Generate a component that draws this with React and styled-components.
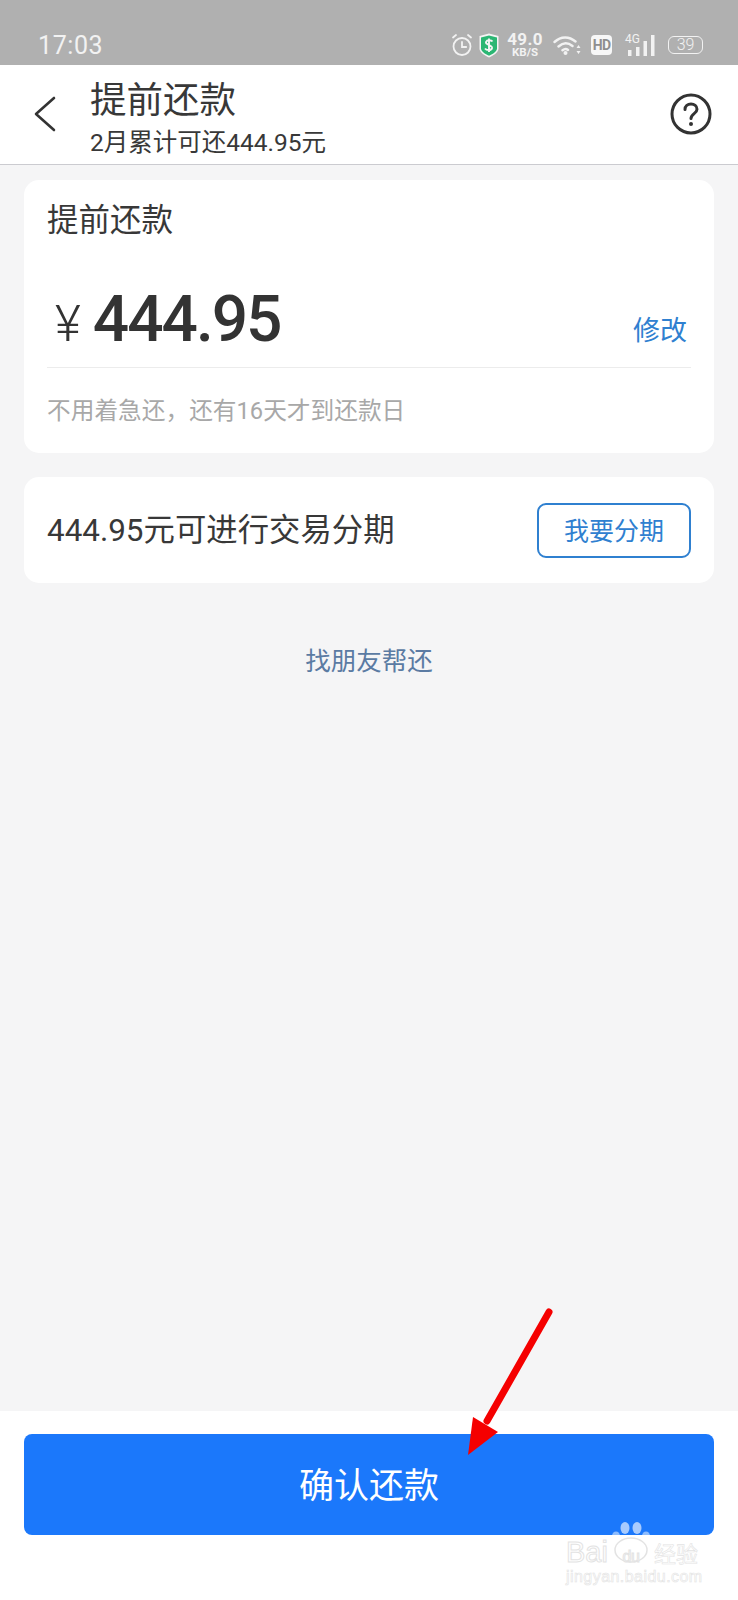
import React from "react";
import styled, { createGlobalStyle } from "styled-components";

const FONT = `Roboto, "Noto Sans CJK SC", sans-serif`;

const Global = createGlobalStyle`
  html, body { margin: 0; padding: 0; background: #f5f5f6; }
  * { box-sizing: border-box; }
`;

const Page = styled.div`
  position: relative;
  width: 738px;
  height: 1600px;
  display: flex;
  flex-direction: column;
  overflow: hidden;
  font-family: ${FONT};
  color: #333;
  background: #f5f5f6;
`;

const StatusBar = styled.div`
  height: 65px;
  flex: none;
  background: #b0b0b0;
  display: flex;
  align-items: flex-end;
  justify-content: space-between;
  padding: 0 35px 4px 38px;
  color: #f2f2f2;
`;
const Time = styled.span`
  font-size: 25px;
  line-height: 30px;
  letter-spacing: 0.6px;
  font-weight: 400;
`;
const StatusIcons = styled.div`
  display: flex;
  align-items: center;
  height: 26px;
  margin-bottom: 3px;
`;
const AlarmIcon = styled.svg`
  margin-right: 6px;
`;
const Speed = styled.div`
  display: flex;
  flex-direction: column;
  align-items: center;
  width: 34px;
  margin: 0 11px 0 9px;
  font-weight: 700;
  line-height: 1;
`;
const SpeedValue = styled.span`
  font-size: 17px;
  line-height: 15px;
  letter-spacing: 0.3px;
`;
const SpeedUnit = styled.span`
  font-size: 11.5px;
  line-height: 11px;
`;
const HdBadge = styled.span`
  width: 21px;
  height: 20px;
  margin: 0 13px 0 10px;
  background: #f7f7f7;
  border-radius: 4px;
  color: #8f8f8f;
  font-size: 14px;
  font-weight: 700;
  line-height: 20px;
  text-align: center;
  letter-spacing: -0.8px;
`;
const Signal = styled.div`
  position: relative;
  width: 30px;
  height: 21px;
  margin-right: 13px;
`;
const SignalLabel = styled.span`
  position: absolute;
  left: 0;
  top: -2px;
  font-size: 12px;
  line-height: 12px;
`;
const Battery = styled.span`
  width: 35px;
  height: 18px;
  border: 1.5px solid #f2f2f2;
  border-radius: 6px;
  font-size: 16px;
  line-height: 15px;
  text-align: center;
  font-weight: 300;
`;

const Header = styled.header`
  height: 100px;
  flex: none;
  background: #fff;
  border-bottom: 1px solid #cbcbd0;
  display: flex;
  align-items: center;
  padding: 0 26px 0 34px;
`;
const BackButton = styled.svg`
  width: 22px;
  height: 36px;
  margin: 0 34px 1px 0;
  flex: none;
`;
const TitleBlock = styled.div`
  flex: 1;
  display: flex;
  flex-direction: column;
`;
const Title = styled.div`
  font-size: 36.5px;
  line-height: 50px;
  margin-top: 6px;
  color: #383838;
`;
const Subtitle = styled.div`
  font-size: 24.5px;
  line-height: 32px;
  color: #383838;
  margin-top: 1px;
`;
const HelpIcon = styled.svg`
  width: 42px;
  height: 42px;
  flex: none;
  margin-bottom: 1px;
`;

const Main = styled.main`
  flex: 1;
  display: flex;
  flex-direction: column;
  padding: 15px 24px 0;
`;
const Card = styled.section`
  background: #fff;
  border-radius: 15px;
`;
const RepayCard = styled(Card)`
  height: 273px;
  padding: 19px 23px 0;
`;
const CardTitle = styled.div`
  font-size: 31.5px;
  line-height: 44px;
  color: #383838;
`;
const AmountRow = styled.div`
  display: flex;
  align-items: flex-end;
  justify-content: space-between;
  height: 125px;
  border-bottom: 1px solid #ececec;
  padding-bottom: 17px;
`;
const Amount = styled.div`
  display: flex;
  align-items: baseline;
  padding-left: 8px;
  margin-bottom: -4px;
`;
const Currency = styled.span`
  font-size: 50px;
  line-height: 60px;
  font-weight: 300;
  margin-right: 12px;
  color: #333;
`;
const AmountValue = styled.span`
  font-size: 64px;
  line-height: 60px;
  font-weight: 500;
  letter-spacing: -2px;
  color: #333;
`;
const EditLink = styled.span`
  font-size: 27px;
  line-height: 38px;
  color: #2f80d0;
  margin-right: 4px;
`;
const Hint = styled.div`
  font-size: 23.7px;
  line-height: 34px;
  color: #a8a8a8;
  margin-top: 26px;
`;
const InstallCard = styled(Card)`
  height: 106px;
  margin-top: 24px;
  padding: 0 23px;
  display: flex;
  align-items: center;
  justify-content: space-between;
`;
const InstallText = styled.span`
  font-size: 31.4px;
  line-height: 40px;
  color: #383838;
  margin-top: 2px;
`;
const OutlineButton = styled.button`
  width: 154px;
  height: 55px;
  padding: 0 0 3px;
  border: 2px solid #2f80d0;
  border-radius: 9px;
  background: #fff;
  color: #2f80d0;
  font-family: ${FONT};
  font-size: 25px;
`;
const FriendLink = styled.div`
  margin-top: 60px;
  text-align: center;
  font-size: 25.5px;
  line-height: 36px;
  color: #5b7ba3;
`;

const Footer = styled.footer`
  height: 189px;
  flex: none;
  background: #fff;
  padding: 23px 24px 0;
`;
const ConfirmButton = styled.button`
  display: block;
  width: 100%;
  height: 101px;
  padding: 0 0 4px;
  border: 0;
  border-radius: 8px;
  background: #1b78fb;
  color: #fff;
  font-family: ${FONT};
  font-size: 35px;
`;

const ArrowOverlay = styled.svg`
  position: absolute;
  left: 460px;
  top: 1305px;
  width: 100px;
  height: 160px;
`;
const Watermark = styled.div`
  position: absolute;
  left: 566px;
  top: 1521px;
  width: 140px;
  height: 70px;
`;
const Paw = styled.svg`
  position: absolute;
  left: 46px;
  top: 0;
  width: 38px;
  height: 42px;
`;
const MarkBrand = styled.div`
  position: absolute;
  left: 0;
  top: 17px;
  width: 132px;
  display: flex;
  justify-content: space-between;
  align-items: baseline;
  font-family: "Liberation Sans", "Noto Sans CJK SC", sans-serif;
  font-size: 29px;
  line-height: 28px;
  color: #fff;
  -webkit-text-stroke: 1px #e3e3e3;
  white-space: nowrap;
`;
const MarkDu = styled.span`
  font-size: 16px;
  letter-spacing: -0.5px;
`;
const MarkCn = styled.span`
  font-size: 22px;
  -webkit-text-stroke: 0.6px #e3e3e3;
`;
const MarkSite = styled.span`
  position: absolute;
  left: 0;
  top: 46px;
  font-family: "Liberation Sans", sans-serif;
  font-size: 16px;
  line-height: 20px;
  letter-spacing: 0.45px;
  color: #fff;
  -webkit-text-stroke: 0.6px #e3e3e3;
  white-space: nowrap;
`;

export default function App() {
  return (
    <Page>
      <Global />
      <StatusBar>
        <Time>17:03</Time>
        <StatusIcons>
          <AlarmIcon width="22" height="24" viewBox="0 0 22 24" fill="none" stroke="#f2f2f2" strokeWidth="1.8" strokeLinecap="round">
            <circle cx="11" cy="13.5" r="8.5" />
            <path d="M11 9v5h4.2M2 4.5l3-2.5M20 4.5l-3-2.5" />
          </AlarmIcon>
          <svg width="20" height="25" viewBox="0 0 20 25">
            <path d="M10 0.5 19.5 3v12.5c0 4-5 7-9.5 9-4.500-2-9.500-5-9.500-9V3Z" fill="#f4f4f4" />
            <path d="M10 2.500 18 4.500v10.800c0 3.200-4 5.800-8 7.500-4-1.700-8-4.300-8-7.500V4.500Z" fill="#2bb673" />
            <path d="M13.500 8.500C12.500 7 8 6.500 7 9c-1 3 6.500 2.500 6 6-.5 2.800-5.500 2.500-7 .5M10 5.500v13.500" fill="none" stroke="#f4f4f4" strokeWidth="1.9" />
          </svg>
          <Speed>
            <SpeedValue>49.0</SpeedValue>
            <SpeedUnit>KB/S</SpeedUnit>
          </Speed>
          <svg width="28" height="20" viewBox="0 0 28 20" fill="none" stroke="#f2f2f2" strokeWidth="2.400" strokeLinecap="round">
            <path d="M1.500 7C8 1 16 1 22.500 6.500M5.500 11.500C10 7.500 15 7.500 19.500 11M9.500 15.200c2-1.600 4-1.600 5.500-.2" />
            <circle cx="12.500" cy="18" r="2" fill="#f2f2f2" stroke="none" />
            <path d="M25.500 10l-2 3h4ZM25.500 19l-2-3h4Z" fill="#f2f2f2" stroke="none" />
          </svg>
          <HdBadge>HD</HdBadge>
          <Signal>
            <SignalLabel>4G</SignalLabel>
            <svg width="30" height="21" viewBox="0 0 30 21" fill="#f2f2f2">
              <rect x="3" y="15" width="3.500" height="6" />
              <rect x="11" y="12" width="3.500" height="9" />
              <rect x="18.500" y="6" width="3.500" height="15" />
              <rect x="26" y="0" width="3.500" height="21" />
            </svg>
          </Signal>
          <Battery>39</Battery>
        </StatusIcons>
      </StatusBar>

      <Header>
        <BackButton viewBox="0 0 22 36" fill="none" stroke="#333" strokeWidth="2.600" strokeLinecap="round" strokeLinejoin="round">
          <path d="M20 2 2 18l18 16" />
        </BackButton>
        <TitleBlock>
          <Title>提前还款</Title>
          <Subtitle>2月累计可还444.95元</Subtitle>
        </TitleBlock>
        <HelpIcon viewBox="0 0 42 42" fill="none" stroke="#333" strokeWidth="3">
          <circle cx="21" cy="21" r="19" />
          <path d="M15 16.500c0-3.500 2.800-5.500 6-5.500s6 2 6 5.200c0 4.500-6 4.300-6 9.300" strokeLinecap="round" />
          <circle cx="21" cy="31" r="2" fill="#333" stroke="none" />
        </HelpIcon>
      </Header>

      <Main>
        <RepayCard>
          <CardTitle>提前还款</CardTitle>
          <AmountRow>
            <Amount>
              <Currency>¥</Currency>
              <AmountValue>444.95</AmountValue>
            </Amount>
            <EditLink>修改</EditLink>
          </AmountRow>
          <Hint>不用着急还，还有16天才到还款日</Hint>
        </RepayCard>
        <InstallCard>
          <InstallText>444.95元可进行交易分期</InstallText>
          <OutlineButton>我要分期</OutlineButton>
        </InstallCard>
        <FriendLink>找朋友帮还</FriendLink>
      </Main>

      <Footer>
        <ConfirmButton>确认还款</ConfirmButton>
      </Footer>

      <ArrowOverlay viewBox="0 0 100 160">
        <path d="M89 7 27 116" stroke="#f50000" strokeWidth="7" strokeLinecap="round" />
        <path d="M8 150 13 112 38 127Z" fill="#f50000" />
      </ArrowOverlay>

      <Watermark>
        <Paw viewBox="0 0 38 42" fill="none">
          <ellipse cx="13" cy="7" rx="4.500" ry="6" fill="#fff" fillOpacity="0.62" />
          <ellipse cx="25" cy="7" rx="4.500" ry="6" fill="#fff" fillOpacity="0.62" />
          <ellipse cx="4" cy="15" rx="4" ry="4.500" fill="#fff" fillOpacity="0.5" />
          <ellipse cx="34" cy="15" rx="4" ry="4.500" fill="#fff" fillOpacity="0.5" />
          <ellipse cx="19" cy="29" rx="16" ry="12" stroke="#e3e3e3" strokeWidth="1.500" />
        </Paw>
        <MarkBrand>
          <span>Bai</span>
          <MarkDu>du</MarkDu>
          <MarkCn>经验</MarkCn>
        </MarkBrand>
        <MarkSite>jingyan.baidu.com</MarkSite>
      </Watermark>
    </Page>
  );
}
